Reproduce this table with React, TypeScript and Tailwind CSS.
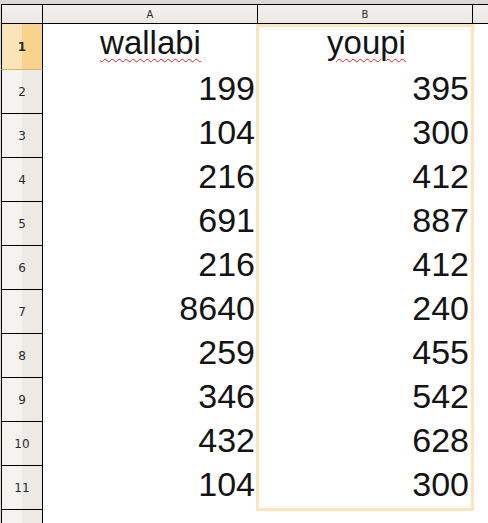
import React from 'react';

const rows: [string, string][] = [
  ['199', '395'],
  ['104', '300'],
  ['216', '412'],
  ['691', '887'],
  ['216', '412'],
  ['8640', '240'],
  ['259', '455'],
  ['346', '542'],
  ['432', '628'],
  ['104', '300'],
];

const rowHead = 'bg-[linear-gradient(to_right,#f4f3f0_50%,#edeae6_50%)]';
const colHead = 'bg-[linear-gradient(to_bottom,#f3f1ee,#ebe8e3)]';
const cellFont = "font-['Liberation_Sans',Arial,sans-serif] leading-[37px] text-[#141414]";
const headFont = "font-['DejaVu_Sans',sans-serif] text-[#2b2b2b]";

function RowHeader({ n, tall, active }: { n: number; tall?: boolean; active?: boolean }) {
  return (
    <div
      className={`w-[42px] shrink-0 border-l border-r border-black flex items-center justify-center ${headFont} text-[12px] ${
        tall ? 'h-[46px]' : 'h-[44px]'
      } ${
        active
          ? 'bg-[linear-gradient(to_right,#fce4b8_50%,#f9d38c_50%)] border-b border-b-[#d2b36f] font-bold'
          : `${rowHead} border-b`
      }`}
    >
      {n}
    </div>
  );
}

export default function App() {
  return (
    <div className="relative w-[488px] h-[523px] overflow-hidden bg-[#dcd9d4] pl-px">
      <div className="h-[4px]" />

      {/* column headers */}
      <div className={`flex h-[20px] border-y border-black ${headFont} text-[10px]`}>
        <div className={`w-[42px] shrink-0 border-l border-r border-black ${colHead}`} />
        <div className={`w-[215px] shrink-0 border-r border-black flex items-center justify-center ${colHead}`}>A</div>
        <div className={`w-[215px] shrink-0 border-r border-black flex items-center justify-center ${colHead}`}>B</div>
        <div className={`flex-1 ${colHead}`} />
      </div>

      {/* row 1 */}
      <div className="flex">
        <RowHeader n={1} tall active />
        <div className={`flex-1 flex bg-white ${cellFont} text-[33px]`}>
          <div className="w-[215px] shrink-0 flex justify-center">
            <span className="underline decoration-wavy decoration-[#e0201c] decoration-1 underline-offset-[4px]">wallabi</span>
          </div>
          <div className="w-[215px] shrink-0 flex justify-center pl-[2px]">
            <span className="underline decoration-wavy decoration-[#e0201c] decoration-1 underline-offset-[4px]">youpi</span>
          </div>
        </div>
      </div>

      {rows.map(([a, b], i) => (
        <div key={i} className="flex">
          <RowHeader n={i + 2} />
          <div className={`flex-1 flex bg-white ${cellFont} text-[34px]`}>
            <div className="w-[215px] shrink-0 text-right pr-[3px]">{a}</div>
            <div className="w-[215px] shrink-0 text-right pr-[4px]">{b}</div>
          </div>
        </div>
      ))}

      {/* row 12 (partial) */}
      <div className="flex h-[20px]">
        <div className={`w-[42px] shrink-0 border-l border-r border-black ${rowHead}`} />
        <div className="flex-1 bg-white" />
      </div>

      {/* selection outline */}
      <div className="absolute left-[256px] top-[24px] w-[218px] h-[487px] border-[3px] border-[#fde5bb] pointer-events-none" />
    </div>
  );
}
